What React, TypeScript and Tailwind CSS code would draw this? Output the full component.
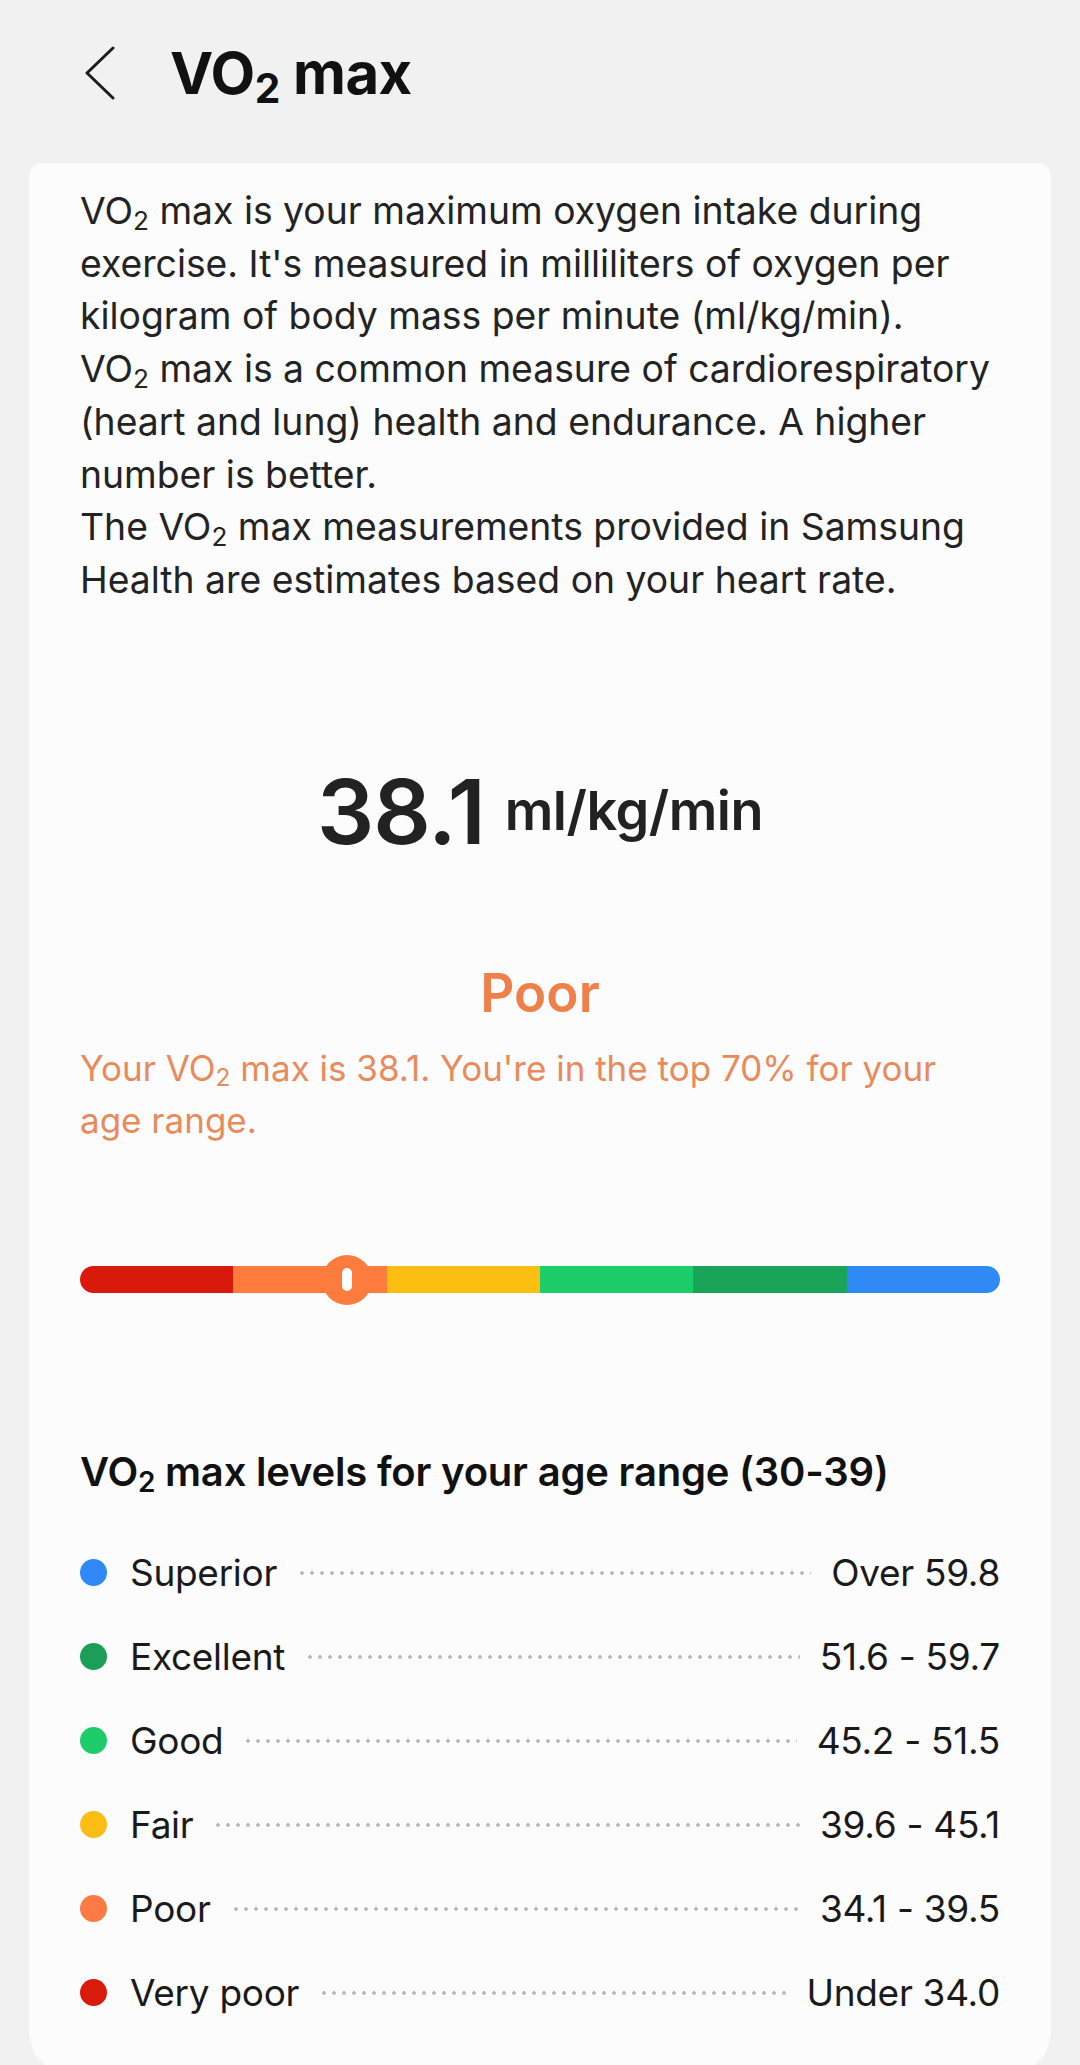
import React from 'react';

const levels = [
  { label: 'Superior', range: 'Over 59.8', color: 'bg-[#2f88f6]' },
  { label: 'Excellent', range: '51.6 - 59.7', color: 'bg-[#1a9e58]' },
  { label: 'Good', range: '45.2 - 51.5', color: 'bg-[#1fcc6c]' },
  { label: 'Fair', range: '39.6 - 45.1', color: 'bg-[#fbbd14]' },
  { label: 'Poor', range: '34.1 - 39.5', color: 'bg-[#fc7a43]' },
  { label: 'Very poor', range: 'Under 34.0', color: 'bg-[#d91b0b]' },
];

const segments = ['bg-[#d9190b]', 'bg-[#fd7b3d]', 'bg-[#fdbe12]', 'bg-[#1ccd6a]', 'bg-[#19a45a]', 'bg-[#2f8af5]'];

const value = 38.1;

function Vo2() {
  return (
    <>
      VO<span className="text-[0.7em] leading-none align-[-0.22em]">2</span>
    </>
  );
}

function Header() {
  return (
    <div className="flex items-start h-[163px] pt-[44px] pl-[85px]">
      <svg width="30" height="54" viewBox="0 0 30 54" className="mt-[2px]" fill="none">
        <polyline points="28,2 2,27 28,52" stroke="#1c1c1c" strokeWidth="3" strokeLinecap="round" strokeLinejoin="round" />
      </svg>
      <h1 className="ml-[55px] text-[58px] leading-none font-bold text-[#111] tracking-[-0.5px]">
        <Vo2 /> max
      </h1>
    </div>
  );
}

function LevelBar() {
  // position within the "Poor" band (34.1 - 39.5), second of six segments
  const pos = ((1 + (value - 34.1) / (39.5 - 34.1)) / 6) * 100;
  return (
    <div className="relative h-[50px] flex items-center">
      <div className="flex w-full h-[27px] rounded-full overflow-hidden">
        {segments.map((c, i) => (
          <div key={i} className={`flex-1 ${c}`} />
        ))}
      </div>
      <div
        className="absolute top-0 -ml-[25px] w-[50px] h-[50px] rounded-full bg-[#fd7b3d] flex items-center justify-center"
        style={{ left: `${pos}%` }}
      >
        <div className="w-[10px] h-[23px] rounded-full bg-white" />
      </div>
    </div>
  );
}

export default function App() {
  return (
    <div className="h-[2065px] overflow-hidden bg-[#f1f1f1] font-['Inter',sans-serif]">
      <Header />
      <div className="mx-[29px] bg-[#fcfcfc] rounded-t-[14px] rounded-b-[44px] px-[51px] pt-[22px] pb-[40px]">
        <p className="text-[37.3px] leading-[52.7px] text-[#232323]">
          <Vo2 /> max is your maximum oxygen intake during exercise. It's measured in milliliters of oxygen per
          kilogram of body mass per minute (ml/kg/min).
          <br />
          <Vo2 /> max is a common measure of cardiorespiratory (heart and lung) health and endurance. A higher
          number is better.
          <br />
          The <Vo2 /> max measurements provided in Samsung Health are estimates based on your heart rate.
        </p>

        <div className="mt-[160px] flex justify-center items-start gap-[20px]">
          <span className="text-[90px] leading-none font-semibold text-[#222] tracking-[-1px]">38.1</span>
          <span className="mt-[17px] text-[54px] leading-none font-semibold text-[#222] tracking-[-0.5px]">ml/kg/min</span>
        </div>

        <div className="mt-[110px] text-center text-[53px] leading-none font-semibold text-[#f0804a]">Poor</div>
        <p className="mt-[22px] pr-[30px] text-[35px] leading-[52px] text-[#e98a5c]">
          Your <Vo2 /> max is 38.1. You're in the top 70% for your age range.
        </p>

        <div className="mt-[109px]">
          <LevelBar />
        </div>

        <h2 className="mt-[147px] text-[40px] leading-none font-semibold text-[#111] tracking-[-0.2px]">
          <Vo2 /> max levels for your age range (30-39)
        </h2>

        <ul className="mt-[35px]">
          {levels.map((l) => (
            <li key={l.label} className="flex items-center h-[84px]">
              <span className={`w-[27px] h-[27px] rounded-full shrink-0 ${l.color}`} />
              <span className="ml-[23px] text-[37px] text-[#1a1a1a] tracking-[-0.3px]">{l.label}</span>
              <span className="flex-1 mx-[20px] h-[4px] bg-[radial-gradient(circle,#bcbcbc_1.6px,transparent_2px)] bg-[length:10px_4px] bg-repeat-x" />
              <span className="text-[37px] text-[#1a1a1a] tracking-[-0.3px]">{l.range}</span>
            </li>
          ))}
        </ul>
      </div>
    </div>
  );
}
